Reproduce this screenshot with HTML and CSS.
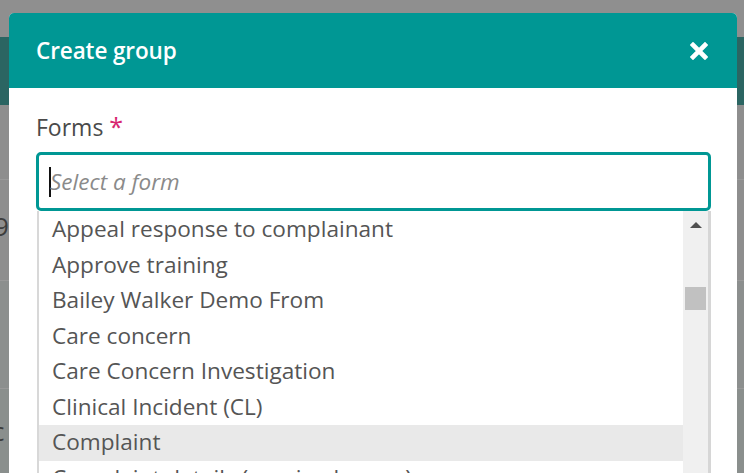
FILE: index.html
```html
<!DOCTYPE html>
<html>
<head>
<meta charset="utf-8">
<link rel="stylesheet" href="styles.css">
</head>
<body>
<div class="page">
  <div class="page-top"></div>
  <div class="page-band"></div>
  <div class="page-row r1"></div>
  <div class="page-row r2"><span class="ghost g1">9</span></div>
  <div class="page-row r3"></div>
  <div class="page-row r4"><span class="ghost g2">c</span></div>
</div>

<div class="modal">
  <div class="modal-header">
    <h2 class="modal-title">Create group</h2>
    <button class="close" aria-label="Close">
      <svg width="18" height="18" viewBox="0 0 18 18"><path d="M3 3 L15 15 M15 3 L3 15" stroke="#fff" stroke-width="4.6" stroke-linecap="square"/></svg>
    </button>
  </div>
  <div class="modal-body">
    <label class="field-label">Forms <span class="req">*</span></label>
    <div class="select-wrap">
      <div class="select-input"><span class="caret"></span><span class="placeholder">Select a form</span></div>
      <div class="dropdown">
        <ul class="options">
          <li>Appeal response to complainant</li>
          <li>Approve training</li>
          <li>Bailey Walker Demo From</li>
          <li>Care concern</li>
          <li>Care Concern Investigation</li>
          <li>Clinical Incident (CL)</li>
          <li class="active">Complaint</li>
          <li>Complaint details (nursing homes)</li>
        </ul>
        <div class="scrollbar">
          <span class="arrow-up"></span>
          <span class="thumb"></span>
        </div>
      </div>
    </div>
  </div>
</div>
</body>
</html>
```
FILE: styles.css
```css
html, body {
  margin: 0;
  padding: 0;
  width: 744px;
  height: 473px;
  overflow: hidden;
  font-family: "Open Sans", "Liberation Sans", sans-serif;
}
body {
  background: #8e8e8e;
  position: relative;
}
.page {
  display: flex;
  flex-direction: column;
  height: 473px;
}
.page-top { height: 37px; background: #8f8f8f; }
.page-band { height: 68px; background: #2b6562; }
.page-row {
  background: #8e8e8e;
  border-bottom: 1px solid #999;
  position: relative;
  overflow: hidden;
}
.r1 { height: 74px; }
.r2 { height: 100px; }
.r3 { height: 107px; background: #8c8f8e; }
.r4 { flex: 1; background: #8a8f8d; border-bottom: none; }
.ghost {
  position: absolute;
  left: -6px;
  font-size: 26px;
  color: #3d3d3d;
}
.g1 { top: 28px; }
.g2 { top: 24px; left: -8px; }

.modal {
  position: absolute;
  left: 9px;
  top: 13px;
  width: 728px;
  height: 480px;
  background: #fff;
  border-radius: 5px 5px 0 0;
  overflow: hidden;
}
.modal-header {
  height: 75px;
  background: #009794;
  display: flex;
  align-items: center;
  justify-content: space-between;
  padding: 0 29px 0 27px;
}
.modal-title {
  margin: 0;
  color: #fff;
  font-size: 22.5px;
  font-weight: 600;
  letter-spacing: -0.1px;
}
.close {
  background: none;
  border: 0;
  padding: 0;
  width: 18px;
  height: 18px;
  display: block;
}
.close svg { display: block; }

.modal-body {
  padding: 22px 26px 0 27px;
}
.field-label {
  display: block;
  font-size: 23px;
  line-height: 32px;
  color: #4a4a4a;
  margin-bottom: 9px;
}
.req { color: #d7256f; font-size: 25px; }

.select-wrap { position: relative; }
.select-input {
  box-sizing: border-box;
  height: 59px;
  border: 3px solid #009794;
  border-radius: 5px;
  display: flex;
  align-items: center;
  padding-left: 10px;
}
.caret {
  width: 2px;
  height: 30px;
  background: #111;
  margin-right: -1px;
}
.placeholder {
  font-style: italic;
  font-size: 22.5px;
  color: #8a8a8a;
}
.dropdown {
  display: flex;
  margin-left: 1px;
  border-left: 2px solid #d8d8d8;
  border-right: 3px solid #d6d6d6;
  height: 270px;
  background: #fff;
}
.options {
  list-style: none;
  margin: 0;
  padding: 1px 0 0;
  flex: 1;
}
.options li {
  height: 35.5px;
  line-height: 34.5px;
  padding-left: 13px;
  font-size: 22.6px;
  color: #555;
  white-space: nowrap;
}
.options li.active { background: #e9e9e9; }
.scrollbar {
  width: 25px;
  background: #f0f0f0;
  position: relative;
}
.arrow-up {
  position: absolute;
  left: 7px;
  top: 11px;
  width: 0;
  height: 0;
  border-left: 6px solid transparent;
  border-right: 6px solid transparent;
  border-bottom: 6px solid #505050;
}
.thumb {
  position: absolute;
  left: 2px;
  top: 76px;
  width: 21px;
  height: 23px;
  background: #c1c1c1;
}
```
